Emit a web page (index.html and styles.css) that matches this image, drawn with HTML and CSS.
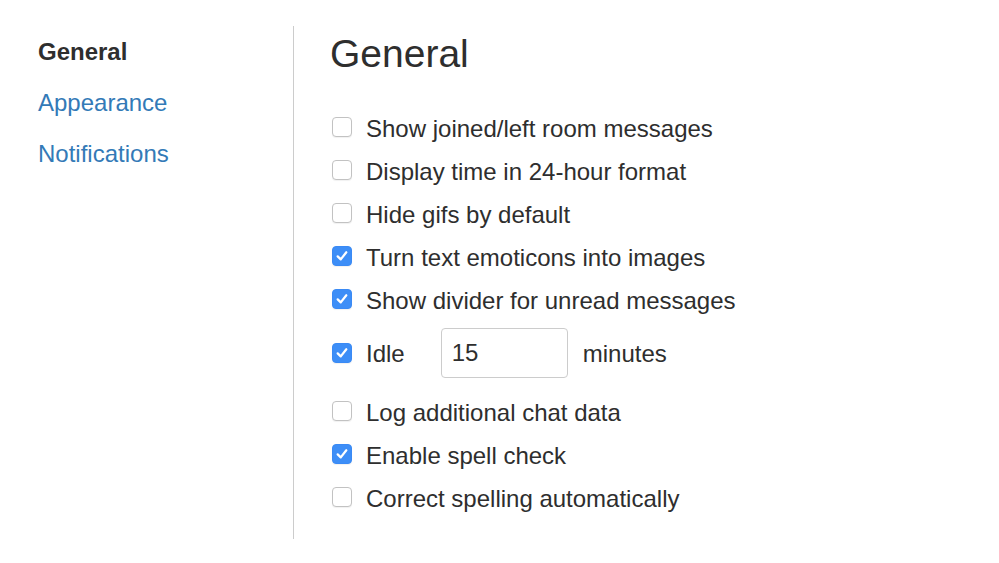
FILE: index.html
```html
<!DOCTYPE html>
<html lang="en">
<head>
<meta charset="utf-8">
<title>Settings</title>
<link rel="stylesheet" href="styles.css">
</head>
<body>
<div class="layout">
  <nav class="sidebar">
    <a class="nav-item active">General</a>
    <a class="nav-item">Appearance</a>
    <a class="nav-item">Notifications</a>
  </nav>
  <main class="content">
    <h1 class="title">General</h1>
    <ul class="options">
      <li class="option"><span class="box"></span><span class="label">Show joined/left room messages</span></li>
      <li class="option"><span class="box"></span><span class="label">Display time in 24-hour format</span></li>
      <li class="option"><span class="box"></span><span class="label">Hide gifs by default</span></li>
      <li class="option"><span class="box checked"><svg viewBox="0 0 20 20" width="20" height="20"><path d="M5.2 10.4 L8.6 13.8 L14.8 5.9" fill="none" stroke="#fff" stroke-width="2.5" stroke-linecap="round" stroke-linejoin="round"/></svg></span><span class="label">Turn text emoticons into images</span></li>
      <li class="option"><span class="box checked"><svg viewBox="0 0 20 20" width="20" height="20"><path d="M5.2 10.4 L8.6 13.8 L14.8 5.9" fill="none" stroke="#fff" stroke-width="2.5" stroke-linecap="round" stroke-linejoin="round"/></svg></span><span class="label">Show divider for unread messages</span></li>
      <li class="option idle"><span class="box checked"><svg viewBox="0 0 20 20" width="20" height="20"><path d="M5.2 10.4 L8.6 13.8 L14.8 5.9" fill="none" stroke="#fff" stroke-width="2.5" stroke-linecap="round" stroke-linejoin="round"/></svg></span><span class="label">Idle</span><input class="minutes-input" type="text" value="15"><span class="unit">minutes</span></li>
      <li class="option"><span class="box"></span><span class="label">Log additional chat data</span></li>
      <li class="option"><span class="box checked"><svg viewBox="0 0 20 20" width="20" height="20"><path d="M5.2 10.4 L8.6 13.8 L14.8 5.9" fill="none" stroke="#fff" stroke-width="2.5" stroke-linecap="round" stroke-linejoin="round"/></svg></span><span class="label">Enable spell check</span></li>
      <li class="option"><span class="box"></span><span class="label">Correct spelling automatically</span></li>
    </ul>
  </main>
</div>
</body>
</html>
```
FILE: styles.css
```css
html, body {
  margin: 0;
  padding: 0;
  background: #ffffff;
}

body {
  font-family: "Liberation Sans", Arial, sans-serif;
  color: #2e2e2e;
  font-size: 24px;
}

.layout {
  display: flex;
  align-items: flex-start;
  padding-top: 26px;
}

.sidebar {
  display: flex;
  flex-direction: column;
  width: 255px;
  padding-left: 38px;
  box-sizing: content-box;
}

.nav-item {
  font-size: 24px;
  line-height: 51px;
  color: #337ab7;
  text-decoration: none;
}

.nav-item.active {
  color: #2e2e2e;
  font-weight: bold;
}

.content {
  border-left: 1px solid #cccccc;
  padding-left: 36px;
  min-height: 513px;
}

.title {
  margin: 4px 0 0 0;
  font-size: 39px;
  line-height: 47px;
  font-weight: normal;
  color: #2e2e2e;
}

.options {
  list-style: none;
  margin: 30px 0 0 0;
  padding: 0;
}

.option {
  display: flex;
  align-items: center;
  height: 43px;
}

.box {
  width: 18px;
  height: 18px;
  margin-left: 2px;
  margin-right: 14px;
  margin-top: -3px;
  border: 1px solid #c2c2c2;
  border-radius: 4px;
  background: #ffffff;
  box-shadow: 0 1px 1px rgba(0, 0, 0, 0.06);
  box-sizing: content-box;
  flex: none;
  display: flex;
  align-items: center;
  justify-content: center;
}

.box.checked {
  border-color: #3a8af5;
  background: #3d8ef7;
}

.box svg {
  display: block;
}

.label {
  line-height: 43px;
}

.option.idle {
  height: 50px;
  margin: 6px 0 13px 0;
}

.option.idle .box {
  margin-top: 0;
}

.minutes-input {
  width: 127px;
  height: 50px;
  box-sizing: border-box;
  margin-left: 36px;
  margin-right: 15px;
  padding: 0 10px;
  border: 1px solid #cccccc;
  border-radius: 4px;
  font-family: "Liberation Sans", Arial, sans-serif;
  font-size: 24px;
  color: #2e2e2e;
  background: #ffffff;
  outline: none;
}

.unit {
  line-height: 43px;
}
```
